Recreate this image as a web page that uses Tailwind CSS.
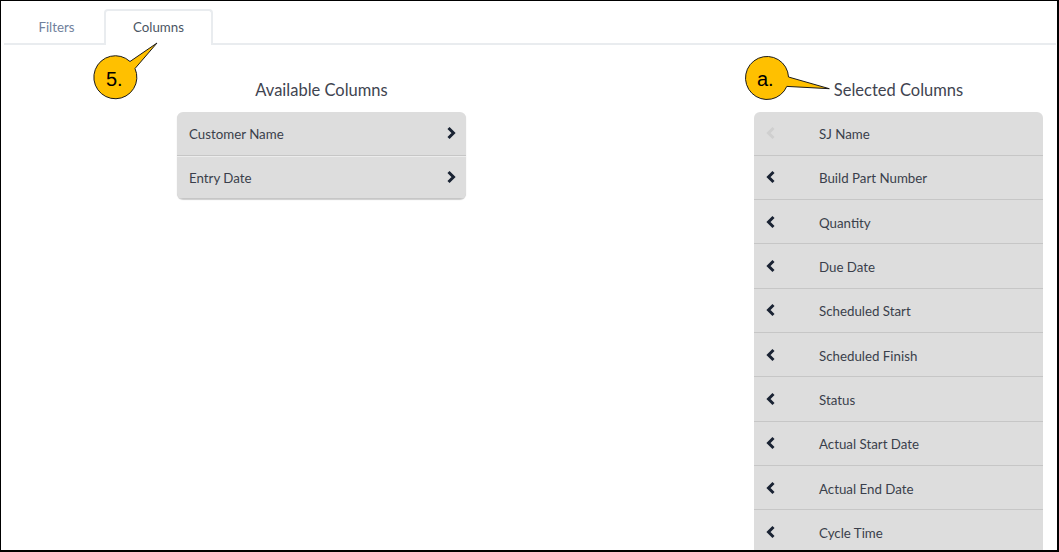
<!DOCTYPE html>
<html><head><meta charset="utf-8"><script src="https://cdn.jsdelivr.net/npm/@tailwindcss/browser@4"></script></head>
<body class="bg-white">
<div class="relative w-[1059px] h-[552px] overflow-hidden bg-white border-t border-l border-r-2 border-b-2 border-black font-['Lato',sans-serif] text-[13.3px] leading-[20px] text-[#3a3f4b]">
  <div class="flex h-[36px] mt-[8px] ml-[3px] mr-[1px] border-b-2 border-[#e9ecef]">
    <div class="w-[100px] pt-[8px] pl-[5px] text-center text-[#71819c]">Filters</div>
    <div class="w-[109px] h-[36px] shrink-0 pt-[6px] text-center bg-white border-2 border-b-0 border-[#e9ecef] rounded-t-[4px] text-[#4b5563]">Columns</div>
  </div>
  <div class="flex justify-between pl-[176px] pr-[14px] pt-[35px]">
    <div class="w-[289px]">
      <h2 class="text-[16.5px] leading-[20px] text-center mb-[12px] text-[#3f4450]">Available Columns</h2>
      <div class="rounded-[6px] overflow-hidden bg-[#dddddd] shadow-[0_1px_1px_rgba(0,0,0,0.2)]">
        <div class="flex items-center justify-between h-[43.6px] pt-[1px] pl-[12px] pr-[10px] border-b border-[#c6c6c6] shadow-[0_1px_0_#ececec]"><span>Customer Name</span><svg class="w-[10px] h-[14px] -mt-[2px]" viewBox="0 0 10 14"><path d="M2.5 2l5 5-5 5" fill="none" stroke="#1a2333" stroke-width="3"/></svg></div>
        <div class="flex items-center justify-between h-[43.6px] pt-[2px] pl-[12px] pr-[10px] border-b border-[#c6c6c6]"><span>Entry Date</span><svg class="w-[10px] h-[14px] -mt-[2px]" viewBox="0 0 10 14"><path d="M2.5 2l5 5-5 5" fill="none" stroke="#1a2333" stroke-width="3"/></svg></div>
      </div>
    </div>
    <div class="w-[289px]">
      <h2 class="text-[16.5px] leading-[20px] text-center mb-[12px] text-[#3f4450]">Selected Columns</h2>
      <div class="rounded-t-[6px] overflow-hidden bg-[#dddddd]">
        <div class="flex items-center h-[43.73px] pt-[1.4px] pl-[12px] border-b border-[#c6c6c6]"><svg class="w-[10px] h-[14px] -mt-[2px] mr-[43px]" viewBox="0 0 10 14"><path d="M7.5 2l-5 5 5 5" fill="none" stroke="#cfcfcf" stroke-width="3"/></svg><span>SJ Name</span></div>
        <div class="flex items-center h-[44.33px] pt-[1.8px] pl-[12px] border-b border-[#c6c6c6]"><svg class="w-[10px] h-[14px] -mt-[2px] mr-[43px]" viewBox="0 0 10 14"><path d="M7.5 2l-5 5 5 5" fill="none" stroke="#1a2333" stroke-width="3"/></svg><span>Build Part Number</span></div>
        <div class="flex items-center h-[44.33px] pt-[1.8px] pl-[12px] border-b border-[#c6c6c6]"><svg class="w-[10px] h-[14px] -mt-[2px] mr-[43px]" viewBox="0 0 10 14"><path d="M7.5 2l-5 5 5 5" fill="none" stroke="#1a2333" stroke-width="3"/></svg><span>Quantity</span></div>
        <div class="flex items-center h-[44.33px] pt-[1.8px] pl-[12px] border-b border-[#c6c6c6]"><svg class="w-[10px] h-[14px] -mt-[2px] mr-[43px]" viewBox="0 0 10 14"><path d="M7.5 2l-5 5 5 5" fill="none" stroke="#1a2333" stroke-width="3"/></svg><span>Due Date</span></div>
        <div class="flex items-center h-[44.33px] pt-[1.8px] pl-[12px] border-b border-[#c6c6c6]"><svg class="w-[10px] h-[14px] -mt-[2px] mr-[43px]" viewBox="0 0 10 14"><path d="M7.5 2l-5 5 5 5" fill="none" stroke="#1a2333" stroke-width="3"/></svg><span>Scheduled Start</span></div>
        <div class="flex items-center h-[44.33px] pt-[1.8px] pl-[12px] border-b border-[#c6c6c6]"><svg class="w-[10px] h-[14px] -mt-[2px] mr-[43px]" viewBox="0 0 10 14"><path d="M7.5 2l-5 5 5 5" fill="none" stroke="#1a2333" stroke-width="3"/></svg><span>Scheduled Finish</span></div>
        <div class="flex items-center h-[44.33px] pt-[1.8px] pl-[12px] border-b border-[#c6c6c6]"><svg class="w-[10px] h-[14px] -mt-[2px] mr-[43px]" viewBox="0 0 10 14"><path d="M7.5 2l-5 5 5 5" fill="none" stroke="#1a2333" stroke-width="3"/></svg><span>Status</span></div>
        <div class="flex items-center h-[44.33px] pt-[1.8px] pl-[12px] border-b border-[#c6c6c6]"><svg class="w-[10px] h-[14px] -mt-[2px] mr-[43px]" viewBox="0 0 10 14"><path d="M7.5 2l-5 5 5 5" fill="none" stroke="#1a2333" stroke-width="3"/></svg><span>Actual Start Date</span></div>
        <div class="flex items-center h-[44.33px] pt-[1.8px] pl-[12px] border-b border-[#c6c6c6]"><svg class="w-[10px] h-[14px] -mt-[2px] mr-[43px]" viewBox="0 0 10 14"><path d="M7.5 2l-5 5 5 5" fill="none" stroke="#1a2333" stroke-width="3"/></svg><span>Actual End Date</span></div>
        <div class="flex items-center h-[44.33px] pt-[1.8px] pl-[12px] border-b border-[#c6c6c6]"><svg class="w-[10px] h-[14px] -mt-[2px] mr-[43px]" viewBox="0 0 10 14"><path d="M7.5 2l-5 5 5 5" fill="none" stroke="#1a2333" stroke-width="3"/></svg><span>Cycle Time</span></div>
      </div>
    </div>
  </div>
  <svg class="absolute left-[89px] top-[39px] w-[72px] h-[64px]" viewBox="0 0 72 64"><path d="M40 21.5 L67 3 L45 28.5 A21.5 21.5 0 1 1 40 21.5 Z" fill="#ffc000" stroke="#1a1a1a" stroke-width="1"/></svg>
  <span class="absolute left-[105px] top-[66px] font-['Liberation_Sans',sans-serif] text-[20px] leading-[24px] text-black">5.</span>
  <svg class="absolute left-[741px] top-[54px] w-[96px] h-[48px]" viewBox="0 0 96 48"><path d="M46.5 22 L87.3 33.7 L44.8 31.4 A21.5 21.5 0 1 1 46.5 22 Z" fill="#ffc000" stroke="#1a1a1a" stroke-width="1"/></svg>
  <span class="absolute left-[756px] top-[66px] font-['Liberation_Sans',sans-serif] text-[20px] leading-[24px] text-black">a.</span>
</div>
</body></html>
